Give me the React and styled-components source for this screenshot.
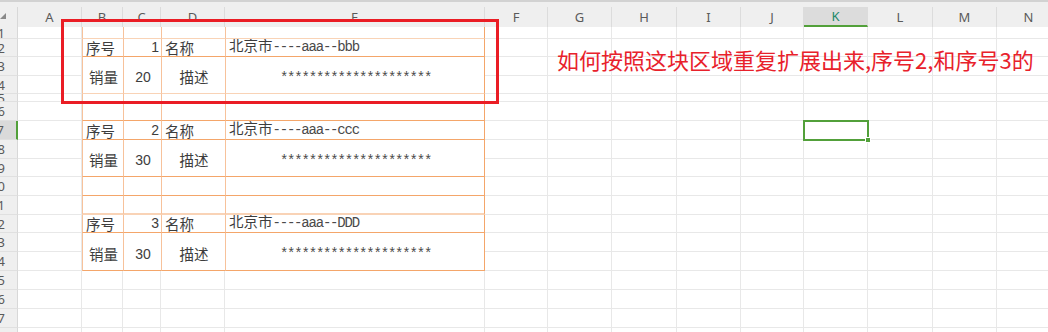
import React from 'react';
import styled, { createGlobalStyle, css } from 'styled-components';

const GlobalStyle = createGlobalStyle`
  html, body {
    margin: 0;
    padding: 0;
    background: #ffffff;
    overflow: hidden;
  }
`;

const gridGreen = '#52a03a';
const orangeDark = '#f4a66a';
const orangeLight = '#f9d3b6';
const orangeLine = '#f7c29b';

const COLUMNS = ['A', 'B', 'C', 'D', 'E', 'F', 'G', 'H', 'I', 'J', 'K', 'L', 'M', 'N'];
const ROW_HEIGHTS = [12, 18, 19, 18, 8, 19, 19, 19, 18, 19, 19, 18, 19, 19, 19, 19, 19, 19];
const ACTIVE_COL = 'K';
const ACTIVE_ROW = 7;

const Sheet = styled.div`
  position: relative;
  width: 1048px;
  height: 332px;
  overflow: hidden;
  display: grid;
  grid-template-columns: 18px 64px 41px 38px 64px 260px 63px 64px 65px 64px 63px 64px 65px 64px 64px;
  grid-template-rows: 7px 20px ${ROW_HEIGHTS.map((h) => `${h}px`).join(' ')};
  font-family: "Noto Sans", "Noto Sans CJK SC", sans-serif;
`;

const Strip = styled.div`
  grid-row: 1;
  grid-column: 1 / -1;
  background: #efefef;
  border-top: 2px solid #d2d2d2;
`;

const Corner = styled.div`
  grid-row: 2;
  grid-column: 1;
  background: #efefef;
  border-right: 1px solid #d8d8d8;
  position: relative;

  &::after {
    content: '';
    position: absolute;
    left: 0;
    top: 6px;
    border-style: solid;
    border-width: 0 0 6px 6px;
    border-color: transparent transparent #8a8a8a transparent;
  }
`;

const ColHead = styled.div`
  grid-row: 2;
  grid-column: ${(p) => p.$col};
  display: flex;
  align-items: center;
  justify-content: center;
  font-size: 13px;
  color: #5a5a5a;
  background: ${(p) => (p.$active ? '#dcdcdc' : '#efefef')};
  border-right: 1px solid #dcdcdc;
  box-sizing: border-box;
  ${(p) =>
    p.$active &&
    css`
      color: #22886a;
      border-bottom: 2px solid ${gridGreen};
    `}
`;

const RowHead = styled.div`
  grid-column: 1;
  grid-row: ${(p) => p.$row};
  display: flex;
  align-items: center;
  justify-content: flex-end;
  padding-right: 12px;
  overflow: hidden;
  font-size: 13px;
  line-height: 18px;
  color: #5a5a5a;
  background: ${(p) => (p.$active ? '#dadada' : '#efefef')};
  border-bottom: 1px solid #e0e0e0;
  border-right: ${(p) => (p.$active ? `2px solid ${gridGreen}` : '1px solid #d8d8d8')};
  box-sizing: border-box;
`;

const Blank = styled.div`
  grid-row: ${(p) => p.$row};
  grid-column: ${(p) => p.$col};
  border-right: 1px solid #e8e8e8;
  border-bottom: 1px solid #e8e8e8;
  box-sizing: border-box;
`;

const bottomLines = {
  dark: `1px solid ${orangeDark}`,
  light: `1px solid ${orangeLight}`,
  double: `2px solid ${orangeLight}`,
};

const TCell = styled.div`
  grid-row: ${(p) => p.$row} / span ${(p) => p.$span};
  grid-column: ${(p) => p.$col};
  display: flex;
  align-items: ${(p) => (p.$span > 1 ? 'center' : 'flex-end')};
  justify-content: ${(p) =>
    p.$align === 'right' ? 'flex-end' : p.$align === 'center' ? 'center' : 'flex-start'};
  padding: ${(p) => (p.$span > 1 ? '3px 2px 0 3px' : '0 2px 0 3px')};
  background: #ffffff;
  border-left: 1px solid ${orangeLine};
  border-right: ${(p) => (p.$last ? `1px solid ${orangeDark}` : 'none')};
  border-bottom: ${(p) => bottomLines[p.$bottom]};
  box-sizing: border-box;
  overflow: hidden;
  white-space: nowrap;
  font-family: "Noto Sans CJK SC", sans-serif;
  font-size: 14.5px;
  line-height: 17px;
  color: #3d3d3d;
`;

const CellText = styled.span`
  display: block;
  white-space: nowrap;
`;

const Num = styled.span`
  font-family: "Liberation Sans", Arial, sans-serif;
  font-size: 14px;
`;

const Mono = styled.span`
  font-family: "Liberation Mono", monospace;
  font-size: 14px;
  letter-spacing: -1.2px;
  color: #4a4a4a;
`;

const Selected = styled.div`
  grid-row: ${(p) => p.$row};
  grid-column: ${(p) => p.$col};
  margin: -1px -1px -1px -1px;
  border: 2px solid ${gridGreen};
  position: relative;

  &::after {
    content: '';
    position: absolute;
    right: -4px;
    bottom: -4px;
    width: 4px;
    height: 4px;
    background: ${gridGreen};
    border: 1px solid #ffffff;
  }
`;

const Highlight = styled.div`
  position: absolute;
  left: 61px;
  top: 19px;
  width: 438px;
  height: 85px;
  border: 3px solid #ea1d25;
  box-sizing: border-box;
  pointer-events: none;
`;

const Note = styled.div`
  position: absolute;
  left: 557px;
  top: 48px;
  font-family: "Noto Sans CJK SC", sans-serif;
  font-size: 22px;
  line-height: 22px;
  color: #e8212b;
  white-space: nowrap;
`;

const stars = '*'.repeat(21);

const blocks = [
  { row: 1, span: 1, bottom: 'light', cells: [] },
  {
    row: 2,
    span: 1,
    bottom: 'dark',
    cells: [
      { text: '序号' },
      { text: <Num>1</Num>, align: 'right' },
      { text: '名称' },
      { text: <>北京市<Mono>----aaa--bbb</Mono></> },
    ],
  },
  {
    row: 3,
    span: 2,
    bottom: 'light',
    cells: [
      { text: '销量', align: 'center' },
      { text: <Num>20</Num>, align: 'center' },
      { text: '描述', align: 'center' },
      { text: <Mono>{stars}</Mono>, align: 'center' },
    ],
  },
  { row: 5, span: 1, bottom: 'light', cells: [] },
  { row: 6, span: 1, bottom: 'dark', cells: [] },
  {
    row: 7,
    span: 1,
    bottom: 'dark',
    cells: [
      { text: '序号' },
      { text: <Num>2</Num>, align: 'right' },
      { text: '名称' },
      { text: <>北京市<Mono>----aaa--ccc</Mono></> },
    ],
  },
  {
    row: 8,
    span: 2,
    bottom: 'dark',
    cells: [
      { text: '销量', align: 'center' },
      { text: <Num>30</Num>, align: 'center' },
      { text: '描述', align: 'center' },
      { text: <Mono>{stars}</Mono>, align: 'center' },
    ],
  },
  { row: 10, span: 1, bottom: 'dark', cells: [] },
  { row: 11, span: 1, bottom: 'double', cells: [] },
  {
    row: 12,
    span: 1,
    bottom: 'dark',
    cells: [
      { text: '序号' },
      { text: <Num>3</Num>, align: 'right' },
      { text: '名称' },
      { text: <>北京市<Mono>----aaa--DDD</Mono></> },
    ],
  },
  {
    row: 13,
    span: 2,
    bottom: 'dark',
    cells: [
      { text: '销量', align: 'center' },
      { text: <Num>30</Num>, align: 'center' },
      { text: '描述', align: 'center' },
      { text: <Mono>{stars}</Mono>, align: 'center' },
    ],
  },
];

// sheet rows start at grid row 3, column A at grid column 2
const gridRow = (r) => r + 2;
const gridCol = (c) => c + 2;

const inTable = (r, c) => r <= 14 && c >= 1 && c <= 4;

export default function App() {
  const blanks = [];
  ROW_HEIGHTS.forEach((_, ri) => {
    const r = ri + 1;
    COLUMNS.forEach((_, c) => {
      if (!inTable(r, c)) {
        blanks.push(<Blank key={`${r}-${c}`} $row={gridRow(r)} $col={gridCol(c)} />);
      }
    });
  });

  return (
    <>
      <GlobalStyle />
      <Sheet>
        <Strip />
        <Corner />
        {COLUMNS.map((name, i) => (
          <ColHead key={name} $col={gridCol(i)} $active={name === ACTIVE_COL}>
            {name}
          </ColHead>
        ))}
        {ROW_HEIGHTS.map((_, ri) => (
          <RowHead key={ri} $row={gridRow(ri + 1)} $active={ri + 1 === ACTIVE_ROW}>
            {ri + 1}
          </RowHead>
        ))}
        {blanks}
        {blocks.map((b) =>
          [0, 1, 2, 3].map((ci) => {
            const cell = b.cells[ci] || {};
            return (
              <TCell
                key={`${b.row}-${ci}`}
                $row={gridRow(b.row)}
                $span={b.span}
                $col={gridCol(ci + 1)}
                $bottom={b.bottom}
                $align={cell.align}
                $last={ci === 3}
              >
                {cell.text && <CellText>{cell.text}</CellText>}
              </TCell>
            );
          })
        )}
        <Selected $row={gridRow(ACTIVE_ROW)} $col={gridCol(COLUMNS.indexOf(ACTIVE_COL))} />
        <Highlight />
        <Note>如何按照这块区域重复扩展出来,序号2,和序号3的</Note>
      </Sheet>
    </>
  );
}
